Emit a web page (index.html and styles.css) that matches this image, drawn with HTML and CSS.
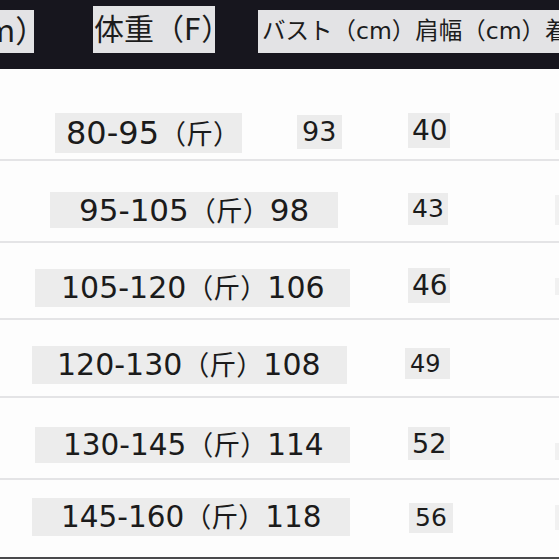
FILE: index.html
```html
<!DOCTYPE html>
<html lang="zh">
<head>
<meta charset="utf-8">
<title>尺码表</title>
<link rel="stylesheet" href="styles.css">
</head>
<body>
<div class="sheet">
  <header class="head">
    <div class="hbox h-size"><span class="cut">m）</span></div>
    <div class="hbox h-weight">体重（F）</div>
    <div class="hbox h-rest">バスト（cm）肩幅（cm）着</div>
  </header>

  <div class="row r1">
    <div class="left">
      <span class="cell w">80-95<span class="u">（斤）</span></span>
      <span class="cell b">93</span>
    </div>
    <div class="right">
      <span class="cell s">40</span>
      <span class="edge"></span>
    </div>
  </div>

  <div class="row r2">
    <div class="left">
      <span class="cell w">95-105<span class="u">（斤）</span>98</span>
    </div>
    <div class="right">
      <span class="cell s">43</span>
      <span class="edge"></span>
    </div>
  </div>

  <div class="row r3">
    <div class="left">
      <span class="cell w">105-120<span class="u">（斤）</span>106</span>
    </div>
    <div class="right">
      <span class="cell s">46</span>
      <span class="edge"></span>
    </div>
  </div>

  <div class="row r4">
    <div class="left">
      <span class="cell w">120-130<span class="u">（斤）</span>108</span>
    </div>
    <div class="right">
      <span class="cell s">49</span>
      <span class="edge"></span>
    </div>
  </div>

  <div class="row r5">
    <div class="left">
      <span class="cell w">130-145<span class="u">（斤）</span>114</span>
    </div>
    <div class="right">
      <span class="cell s">52</span>
      <span class="edge"></span>
    </div>
  </div>

  <div class="row r6">
    <div class="left">
      <span class="cell w">145-160<span class="u">（斤）</span>118</span>
    </div>
    <div class="right">
      <span class="cell s">56</span>
      <span class="edge"></span>
    </div>
  </div>
</div>
</body>
</html>
```

FILE: styles.css
```css
* { box-sizing: border-box; }

html, body {
  margin: 0;
  padding: 0;
  background: #fdfdfd;
}

.sheet {
  width: 559px;
  height: 559px;
  overflow: hidden;
  display: flex;
  flex-direction: column;
  font-family: "DejaVu Sans", "Noto Sans CJK SC", sans-serif;
  color: #1b1b1b;
  border-bottom: 2px solid #4a4a4c;
}

/* header band */
.head {
  flex: none;
  height: 69px;
  background: #17161e;
  display: flex;
  align-items: flex-start;
  padding-top: 10px;
  margin-bottom: 1px;
}

.hbox {
  background: #e3e3e5;
  color: #1c1c1c;
  white-space: nowrap;
}

.h-size {
  width: 34px;
  height: 43px;
  font-size: 31px;
  line-height: 43px;
  overflow: hidden;
}

.h-size .cut {
  display: inline-block;
  margin-left: -15px;
}

.h-weight {
  margin-left: 59px;
  margin-top: -4px;
  width: 122px;
  height: 47px;
  font-size: 30px;
  line-height: 47px;
  padding-left: 1px;
}

.h-rest {
  margin-left: 43px;
  flex: 1;
  height: 43px;
  font-size: 23.5px;
  line-height: 43px;
  padding-left: 4px;
  overflow: hidden;
}

/* body rows */
.row {
  flex: none;
  display: grid;
  grid-template-columns: 404px 1fr;
  align-items: start;
  border-bottom: 2px solid #e4e4e6;
}

.left, .right {
  display: flex;
  align-items: flex-start;
}

.cell {
  background: #ececec;
  white-space: nowrap;
  display: block;
}

.w {
  font-size: 30px;
}

.w .u {
  font-size: 27px;
}

.s {
  font-size: 27px;
  padding-left: 4px;
}

.edge {
  margin-left: auto;
  width: 4px;
  background: #f1f1f1;
}

/* row 1 */
.r1 { height: 91px; padding-top: 43px; }
.r1 .w { margin-left: 55px; width: 187px; height: 40px; line-height: 40px; padding-left: 11px; font-size: 32px; }
.r1 .b { margin-left: 55px; margin-top: 2px; width: 45px; height: 34px; line-height: 34px; font-size: 27px; padding-left: 5px; }
.r1 .s { margin-left: 4px; width: 42px; height: 35px; line-height: 35px; font-size: 28px; }
.r1 .edge { height: 37px; }

/* row 2 */
.r2 { height: 82px; padding-top: 31px; }
.r2 .w { margin-left: 50px; width: 288px; height: 36px; line-height: 36px; padding-left: 29px; font-size: 31px; }
.r2 .s { margin-left: 4px; margin-top: 1px; width: 40px; height: 32px; line-height: 32px; font-size: 25px; }
.r2 .edge { margin-top: 3px; height: 30px; }

/* row 3 */
.r3 { height: 77px; padding-top: 26px; }
.r3 .w { margin-left: 35px; width: 315px; height: 38px; line-height: 38px; padding-left: 26px; }
.r3 .s { margin-left: 4px; margin-top: -1px; width: 42px; height: 35px; line-height: 35px; font-size: 28px; }
.r3 .edge { margin-top: 9px; height: 17px; }

/* row 4 */
.r4 { height: 78px; padding-top: 26px; }
.r4 .w { margin-left: 32px; width: 315px; height: 38px; line-height: 38px; padding-left: 25px; }
.r4 .s { margin-left: 1px; margin-top: 2px; width: 45px; height: 31px; line-height: 33px; font-size: 24px; padding-left: 5px; }
.r4 .edge { display: none; }

/* row 5 */
.r5 { height: 82px; padding-top: 29px; }
.r5 .w { margin-left: 35px; width: 315px; height: 36px; line-height: 36px; padding-left: 28px; font-size: 29.5px; }
.r5 .s { margin-left: 4px; width: 42px; height: 33px; line-height: 33px; font-size: 27px; }
.r5 .edge { margin-top: 16px; height: 17px; }

/* row 6 */
.r6 { height: 77px; padding-top: 18px; border-bottom: none; }
.r6 .w { margin-left: 32px; width: 318px; height: 38px; line-height: 38px; padding-left: 29px; font-size: 29.5px; }
.r6 .s { margin-left: 5px; margin-top: 5px; width: 44px; height: 30px; line-height: 30px; font-size: 25px; padding-left: 6px; }
.r6 .edge { margin-top: 7px; height: 25px; }
```
